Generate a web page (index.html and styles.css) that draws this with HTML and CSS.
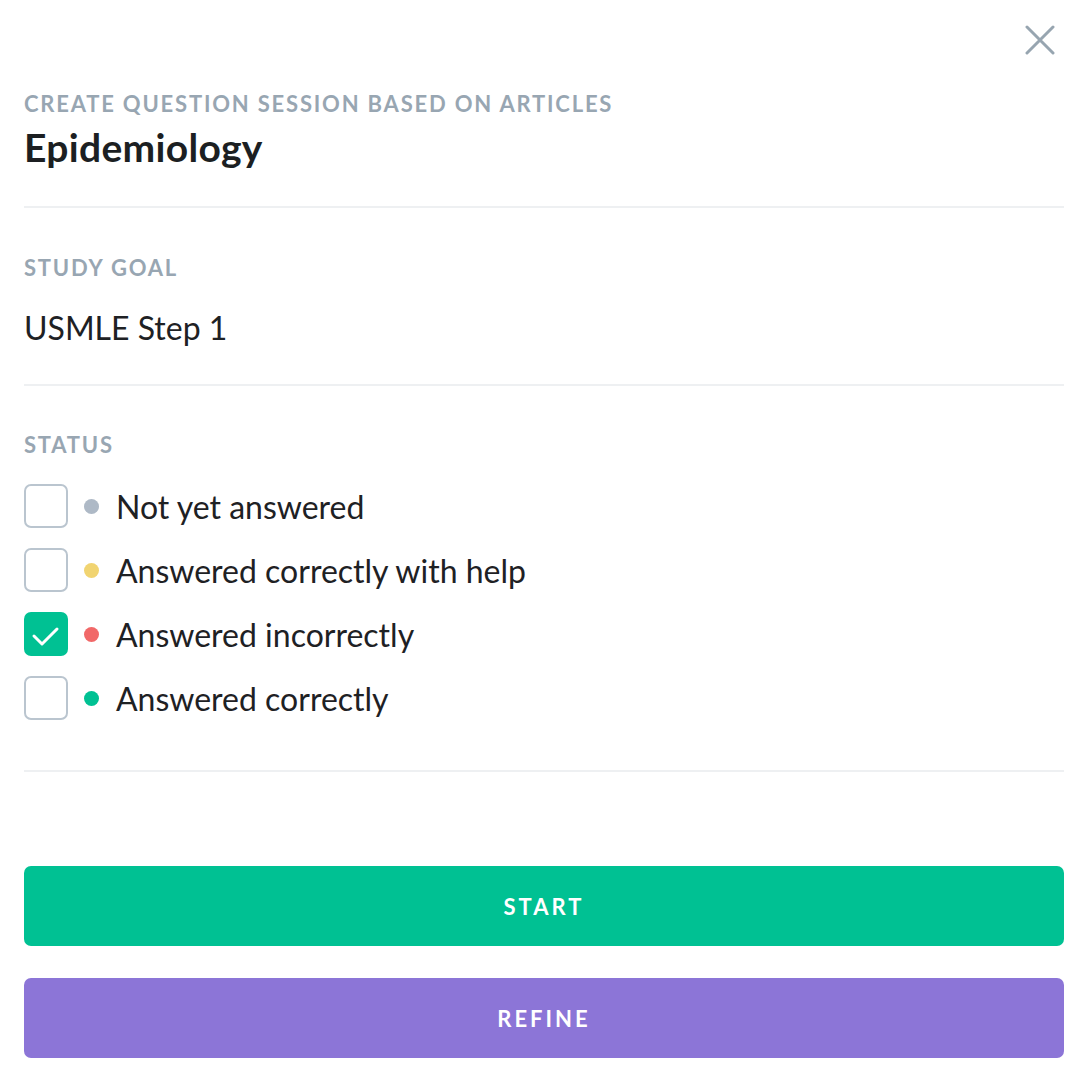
FILE: index.html
```html
<!DOCTYPE html>
<html lang="en">
<head>
<meta charset="UTF-8" />
<meta name="viewport" content="width=device-width, initial-scale=1" />
<title>Create question session</title>
<link rel="stylesheet" href="styles.css">
</head>
<body>
  <main class="panel">
    <div class="close-row">
      <button class="close" aria-label="Close">
        <svg width="30" height="30" viewBox="0 0 30 30">
          <path d="M2 2 L28 28 M28 2 L2 28" stroke="#97a5b0" stroke-width="3" stroke-linecap="round" fill="none" />
        </svg>
      </button>
    </div>

    <section class="section header">
      <div class="label">Create question session based on articles</div>
      <h1 class="title">Epidemiology</h1>
    </section>

    <section class="section goal">
      <div class="label">Study goal</div>
      <div class="value">USMLE Step 1</div>
    </section>

    <section class="section status">
      <div class="label">Status</div>
      <ul class="options">
        <li class="option">
          <span class="box"></span>
          <span class="dot grey"></span>
          <span>Not yet answered</span>
        </li>
        <li class="option">
          <span class="box"></span>
          <span class="dot yellow"></span>
          <span>Answered correctly with help</span>
        </li>
        <li class="option">
          <span class="box checked">
            <svg width="44" height="44" viewBox="0 0 44 44">
              <path d="M10 24 L18 32 L33 17" stroke="#fff" stroke-width="3" stroke-linecap="round" stroke-linejoin="round" fill="none" />
            </svg>
          </span>
          <span class="dot red"></span>
          <span>Answered incorrectly</span>
        </li>
        <li class="option">
          <span class="box"></span>
          <span class="dot green"></span>
          <span>Answered correctly</span>
        </li>
      </ul>
    </section>

    <div class="actions">
      <button class="btn start">Start</button>
      <button class="btn refine">Refine</button>
    </div>
  </main>
</body>
</html>
```

FILE: styles.css
```css
body {
  margin: 0;
  background: #fff;
  font-family: Lato, "Open Sans", sans-serif;
  color: #1e2124;
}
.panel {
  padding: 0 22px 0 24px;
}
.close-row {
  height: 90px;
  display: flex;
  justify-content: flex-end;
  align-items: flex-start;
}
.close {
  margin-top: 25px;
  margin-right: 9px;
  padding: 0;
  border: none;
  background: none;
  width: 30px;
  height: 30px;
  cursor: pointer;
}
.close svg {
  display: block;
}
.section {
  border-bottom: 2px solid #eef0f2;
}
.label {
  font-size: 22px;
  line-height: 28px;
  font-weight: 700;
  letter-spacing: 1.8px;
  text-transform: uppercase;
  color: #98a6b2;
}
.title {
  margin: 5px 0 0;
  font-size: 39px;
  line-height: 48px;
  font-weight: 700;
  letter-spacing: 0.3px;
  color: #1c1f22;
}
.header {
  padding-bottom: 35px;
}
.goal {
  padding: 46px 0 37px;
}
.value {
  margin-top: 27px;
  font-size: 32px;
  line-height: 38px;
}
.status {
  padding: 45px 0 50px;
}
.options {
  list-style: none;
  margin: 25px 0 0;
  padding: 0;
  display: flex;
  flex-direction: column;
  gap: 20px;
}
.option {
  display: flex;
  align-items: center;
  height: 44px;
  font-size: 32px;
}
.box {
  width: 44px;
  height: 44px;
  box-sizing: border-box;
  border: 2px solid #bac5cf;
  border-radius: 7px;
  flex-shrink: 0;
}
.box.checked {
  background: #00c193;
  border: none;
}
.box svg {
  display: block;
}
.dot {
  width: 15px;
  height: 15px;
  border-radius: 50%;
  margin: 0 17px 0 16px;
  flex-shrink: 0;
}
.dot.grey { background: #aeb9c6; }
.dot.yellow { background: #f1d471; }
.dot.red { background: #f16868; }
.dot.green { background: #00c193; }
.actions {
  margin-top: 94px;
  display: flex;
  flex-direction: column;
  gap: 32px;
}
.btn {
  height: 80px;
  border: none;
  border-radius: 7px;
  color: #fff;
  font-family: Lato, "Open Sans", sans-serif;
  font-size: 22px;
  font-weight: 700;
  letter-spacing: 3px;
  text-transform: uppercase;
  cursor: pointer;
}
.start { background: #00c193; }
.refine { background: #8c75d7; }
```
